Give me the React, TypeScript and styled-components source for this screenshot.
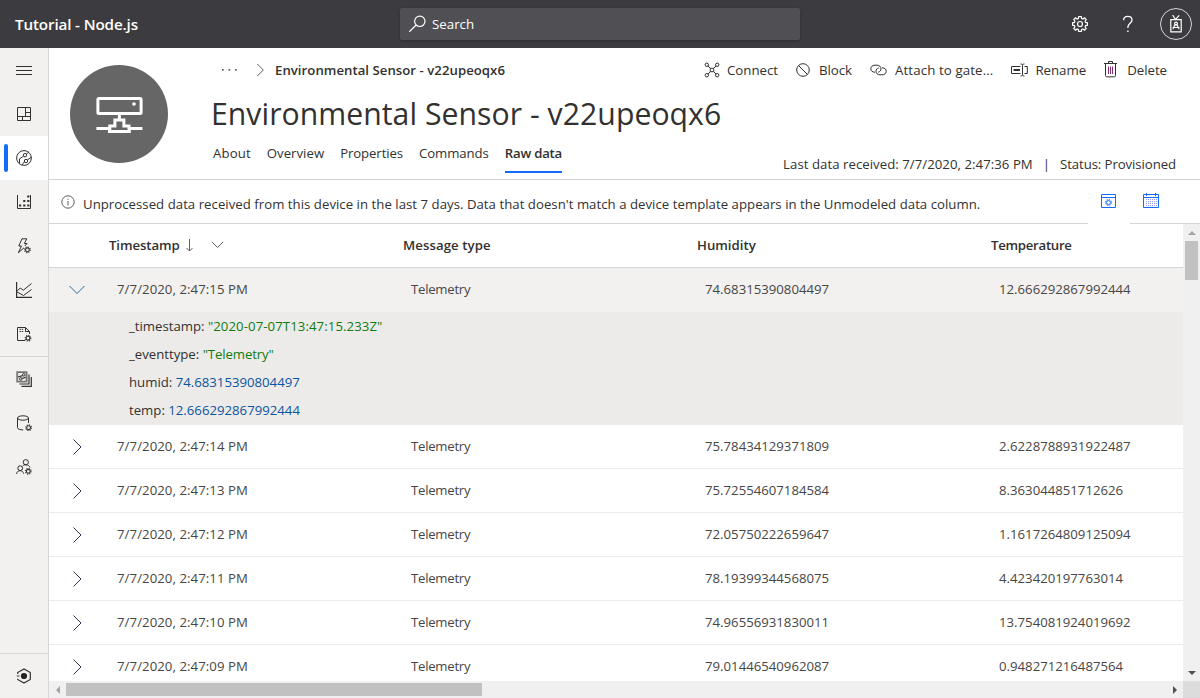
import React from "react";
import styled, { createGlobalStyle, css } from "styled-components";

const GlobalStyle = createGlobalStyle`
  * { box-sizing: border-box; }
  html, body { margin: 0; padding: 0; }
  body {
    background: #fff;
    color: #323130;
    font-family: "Open Sans", "Noto Sans", sans-serif;
    font-size: 13.2px;
    overflow: hidden;
  }
`;

const Shell = styled.div`
  display: flex;
  flex-direction: column;
  width: 1200px;
  height: 698px;
  overflow: hidden;
`;

/* ---------- top bar ---------- */

const TopBar = styled.header`
  flex: none;
  height: 48px;
  display: grid;
  grid-template-columns: 400px 400px 1fr;
  align-items: center;
  background: #3c3b40;
  color: #fff;
`;

const ProductName = styled.div`
  padding-left: 15px;
  font-size: 15.2px;
  font-weight: 600;
  letter-spacing: -0.13px;
`;

const SearchBox = styled.div`
  height: 32px;
  display: flex;
  align-items: center;
  gap: 5px;
  padding: 0 0 1px 9px;
  border-radius: 2px;
  background: #505054;
  box-shadow: 0 1px 3px rgba(0, 0, 0, 0.25);
  font-size: 13.3px;
`;

const TopActions = styled.div`
  display: flex;
  justify-content: flex-end;
  align-items: center;
  padding-right: 8px;
`;

const TopAction = styled.div`
  width: 48px;
  display: flex;
  justify-content: center;
`;

const Avatar = styled.div`
  width: 32px;
  height: 32px;
  margin-left: 8px;
  display: flex;
  align-items: center;
  justify-content: center;
  border: 1px solid #d6d6d8;
  border-radius: 50%;
`;

/* ---------- side navigation ---------- */

const Body = styled.div`
  flex: 1;
  min-height: 0;
  display: flex;
`;

const SideNav = styled.nav`
  flex: none;
  width: 49px;
  display: flex;
  flex-direction: column;
  background: #f2f1f0;
  border-right: 1px solid #d6d6d6;
`;

const NavItem = styled.div<{ $active?: boolean; $divided?: boolean; $last?: boolean }>`
  height: 44px;
  display: flex;
  align-items: center;
  justify-content: center;
  ${(p) =>
    p.$active &&
    css`
      background: #fff;
      justify-content: flex-start;
      &::before {
        content: "";
        width: 4px;
        height: 28px;
        margin: 0 8px 0 4px;
        border-radius: 2px;
        background: #136bfb;
      }
    `}
  ${(p) =>
    p.$divided &&
    css`
      height: 45px;
      border-top: 1px solid #d6d6d6;
    `}
  ${(p) =>
    p.$last &&
    css`
      margin-top: auto;
    `}
`;

/* ---------- device header ---------- */

const Main = styled.main`
  flex: 1;
  min-width: 0;
  display: flex;
  flex-direction: column;
`;

const DeviceHeader = styled.section`
  flex: none;
  height: 132px;
  display: flex;
  border-bottom: 1px solid #d6d6d6;
`;

const DeviceBadge = styled.div`
  flex: none;
  width: 98px;
  height: 98px;
  margin: 17px 43px 0 21px;
  display: flex;
  align-items: center;
  justify-content: center;
  border-radius: 50%;
  background: #666;
`;

const DeviceInfo = styled.div`
  flex: 1;
  min-width: 0;
  display: flex;
  flex-direction: column;
`;

const CrumbRow = styled.div`
  height: 44px;
  display: flex;
  align-items: center;
  justify-content: space-between;
  padding: 0 33px 0 11px;
`;

const Crumbs = styled.div`
  display: flex;
  align-items: center;
`;

const CrumbCurrent = styled.span`
  margin-left: 10px;
  font-size: 13.2px;
  font-weight: 600;
  letter-spacing: 0.03px;
`;

const Commands = styled.div`
  display: flex;
  align-items: center;
  gap: 18px;
  padding-bottom: 1px;
`;

const Command = styled.div<{ $gap?: number; $track?: number }>`
  display: flex;
  align-items: center;
  gap: ${(p) => p.$gap ?? 7}px;
  font-size: 13.3px;
  letter-spacing: ${(p) => p.$track ?? -0.05}px;
  white-space: nowrap;
`;

const Title = styled.h1`
  height: 44px;
  margin: 0;
  line-height: 43px;
  font-size: 30.2px;
  letter-spacing: 0.04px;
  font-weight: 400;
  white-space: nowrap;
`;

const TabRow = styled.div`
  display: flex;
  justify-content: space-between;
  padding: 0 24px 0 2px;
`;

const Tabs = styled.div`
  display: flex;
  gap: 16px;
`;

const Tab = styled.div<{ $active?: boolean; $track?: number }>`
  height: 37px;
  padding-top: 8px;
  line-height: 19px;
  white-space: nowrap;
  border-bottom: 2px solid ${(p) => (p.$active ? "#136bfb" : "transparent")};
  font-weight: ${(p) => (p.$active ? 600 : 400)};
  letter-spacing: ${(p) => p.$track ?? 0}px;
`;

const StatusLine = styled.div`
  display: flex;
  gap: 10px;
  padding-top: 19px;
  line-height: 19px;
  white-space: nowrap;
`;

const StatusPart = styled.span<{ $track?: number }>`
  letter-spacing: ${(p) => p.$track ?? 0}px;
`;

/* ---------- notice ---------- */

const Notice = styled.section`
  flex: none;
  height: 44px;
  display: flex;
`;

const NoticeText = styled.div`
  width: 1039px;
  display: flex;
  align-items: center;
  gap: 8px;
  padding: 5px 0 0 12px;
  border-bottom: 1px solid #d6d6d6;
  letter-spacing: 0.032px;
  white-space: nowrap;
  svg { position: relative; top: -2px; }
`;

const NoticeTool = styled.div<{ $ruled?: boolean }>`
  width: ${(p) => (p.$ruled ? 70 : 42)}px;
  padding: 13px 0 0 12px;
  border-bottom: ${(p) => (p.$ruled ? "1px solid #d6d6d6" : "0")};
`;

/* ---------- table ---------- */

const TableFrame = styled.section`
  flex: 1;
  min-height: 0;
  display: grid;
  grid-template-columns: 1134px 17px;
  grid-template-rows: 457px 17px;
`;

const Table = styled.div`
  overflow: hidden;
`;

const rowGrid = css`
  display: grid;
  grid-template-columns: 60px 294px 294px 294px 192px;
  align-items: center;
  height: 44px;
`;

const HeadRow = styled.div`
  ${rowGrid}
  border-bottom: 1px solid #d6d6d6;
  font-weight: 600;
`;

const HeadCell = styled.div<{ $track?: number }>`
  display: flex;
  align-items: center;
  padding-bottom: 1px;
  letter-spacing: ${(p) => p.$track ?? 0}px;
  white-space: nowrap;
`;

const Row = styled.div<{ $open?: boolean }>`
  ${rowGrid}
  border-bottom: 1px solid ${(p) => (p.$open ? "#f2f1f0" : "#edebe9")};
  background: ${(p) => (p.$open ? "#f2f1f0" : "#fff")};
  color: #484644;
`;

const Cell = styled.div<{ $track?: number }>`
  padding: 0 0 1px 8px;
  letter-spacing: ${(p) => p.$track ?? 0}px;
  white-space: nowrap;
`;

const Toggle = styled.div`
  display: flex;
  padding-left: 19px;
`;

const Details = styled.div`
  height: 113px;
  padding-left: 80px;
  background: #edebe9;
`;

const Detail = styled.div`
  height: 28px;
  line-height: 29px;
  white-space: nowrap;
`;

const Value = styled.span<{ $kind: "string" | "number"; $track?: number }>`
  color: ${(p) => (p.$kind === "string" ? "#107c10" : "#0b559f")};
  letter-spacing: ${(p) => p.$track ?? 0}px;
`;

/* ---------- scroll bars ---------- */

const ScrollTrack = styled.div<{ $axis: "x" | "y" }>`
  display: flex;
  flex-direction: ${(p) => (p.$axis === "x" ? "row" : "column")};
  align-items: center;
  background: #f0f0f0;
`;

const ScrollThumb = styled.div<{ $axis: "x" | "y" }>`
  background: #c1c1c1;
  width: ${(p) => (p.$axis === "x" ? "416px" : "13px")};
  height: ${(p) => (p.$axis === "x" ? "13px" : "39px")};
`;

const ScrollArrow = styled.div<{ $end?: boolean }>`
  width: 17px;
  height: 17px;
  display: flex;
  align-items: center;
  justify-content: center;
  margin: ${(p) => (p.$end ? "auto 0 0 0" : "0")};
`;

const ScrollArrowRight = styled(ScrollArrow)`
  margin: 0 0 0 auto;
`;

const Corner = styled.div`
  background: #dcdcdc;
`;

/* ---------- icons ---------- */

const Svg = styled.svg`
  flex: none;
`;

const BadgeSvg = styled.svg`
  margin-top: 2px;
`;

const CrumbArrow = styled.svg`
  margin-left: 18px;
`;

const SortArrow = styled.svg`
  margin-left: 5px;
`;

const SortChevron = styled.svg`
  margin-left: 18px;
`;

const Icon = ({
  size = 16,
  w,
  color = "#323130",
  sw = 1,
  children,
}: {
  size?: number;
  w?: number;
  color?: string;
  sw?: number;
  children: React.ReactNode;
}) => (
  <Svg
    width={w ?? size}
    height={size}
    viewBox={`0 0 ${w ?? size} ${size}`}
    fill="none"
    stroke={color}
    strokeWidth={sw}
  >
    {children}
  </Svg>
);

const MiniGear = ({ x, y }: { x: number; y: number }) => (
  <g transform={`translate(${x} ${y})`}>
    <circle r="1.9" strokeWidth="1.1" />
    <circle r="2.8" strokeWidth="1.2" strokeDasharray="1.1 1.1" />
  </g>
);

const Menu = () => (
  <Icon><path d="M0 4.5H16M0 8.5H16M0 12.5H16" /></Icon>
);
const Dashboard = () => (
  <Icon><path d="M1.5 1.5H14.5V14.5H1.5ZM1.5 10.5H14.5M9.5 1.5V10.5M9.5 6.5H14.5M6.5 10.5V14.5" /></Icon>
);
const Devices = () => (
  <Icon>
    <circle cx="8" cy="8" r="7.4" />
    <circle cx="9" cy="5.2" r="1.7" />
    <circle cx="10" cy="11" r="1.7" />
    <path d="M7.5 6.2L3.5 8.8V13.2M11.3 10L15.2 7.4M10.3 4.1L12.5 2.2M8.5 11.7L6 14.9" />
  </Icon>
);
const DeviceGroups = () => (
  <Icon>
    <path d="M1.5 1V14.5H14.5V1" />
    <path d="M3 11.5H5.2M7.2 11.5H9.4M11.2 11.5H13.4M7.2 7H9.4M11.2 7H13.4M11.2 2.5H13.4" strokeWidth="2.2" />
  </Icon>
);
const Rules = () => (
  <Icon>
    <path d="M6 .8H10.8L8.3 5.5H11L8.8 8M6 .8L2.8 8H5.5L2.3 14.8L8 9.8" />
    <MiniGear x={11.4} y={11.8} />
  </Icon>
);
const Analytics = () => (
  <Icon>
    <path d="M.6 0V15.4H16" strokeWidth="1.2" />
    <path d="M1 9.2L4.2 6L7.4 8.2L15.5 1.5M1 10L7.5 13.5L15.5 7.5" />
  </Icon>
);
const Jobs = () => (
  <Icon>
    <path d="M9 14.5H1.5V1.5H9.5L13.5 5.5V8M9.5 1.5V5.5H13.5" />
    <path d="M3.5 3.3H8M3.5 5.5H8" strokeDasharray="1.4 .8" />
    <MiniGear x={12} y={12.2} />
  </Icon>
);
const Templates = () => (
  <Icon>
    <path d="M1.2 1.2H10.6V10.6H1.2Z" strokeWidth="1.8" stroke="#777675" />
    <circle cx="7.8" cy="3.8" r="1.3" />
    <circle cx="4.8" cy="7.9" r="1.3" />
    <path d="M2 6L6.6 4.6M6 7.5L9.6 6.4M13 3.5V13H3.5M15.3 6V15.3H5.5" strokeWidth="1.2" />
  </Icon>
);
const DataExport = () => (
  <Icon>
    <ellipse cx="7" cy="3" rx="5.5" ry="2.2" />
    <path d="M1.5 3V12.7C1.5 14 4 14.9 7.2 14.9M12.5 3V8" />
    <MiniGear x={12.6} y={12.7} />
  </Icon>
);
const Admin = () => (
  <Icon>
    <circle cx="9.8" cy="3.2" r="2.6" />
    <circle cx="4.2" cy="9.2" r="2.4" />
    <path d="M.6 15C.8 12.8 2.2 11.7 4.2 11.7C6.2 11.7 7.2 12.9 7.6 14.6M6.7 7C7.5 6.1 8.6 5.8 9.8 5.8C12 5.8 13.6 6.9 14 8.6" />
    <MiniGear x={12.3} y={12.3} />
  </Icon>
);
const AppBadge = () => (
  <Icon>
    <path d="M1.7 6V4.5L8 1L14.3 4.5V11.5L8 15L1.7 11.5V10.8M.8 8H3.5" strokeWidth="1.2" />
    <circle cx="8" cy="8" r="3.1" fill="#222" stroke="none" />
  </Icon>
);

const DeviceGlyph = () => (
  <BadgeSvg width="48" height="38" viewBox="0 0 48 38" fill="none" stroke="#fff" strokeWidth="3">
    <rect x="2.9" y="2.5" width="43.2" height="15" rx="1" />
    <circle cx="39" cy="8" r="1.8" fill="#fff" stroke="none" />
    <path d="M24.4 18V23" />
    <path d="M1.4 32.5H14.4V35.5H34.4V32.5H47.4" strokeWidth="2.8" />
    <path d="M14.8 34V30H19.9V24H28.9V30H34V34" strokeWidth="3" />
  </BadgeSvg>
);

const GEAR =
  "M6.7.6H9.3L9.7 2.5L10.9 3L12.5 1.9L14.2 3.6L13.1 5.2L13.6 6.4L15.4 6.8V9.2L13.6 9.6L13.1 10.8L14.2 12.4L12.5 14.1L10.9 13L9.7 13.5L9.3 15.4H6.7L6.3 13.5L5.1 13L3.5 14.1L1.8 12.4L2.9 10.8L2.4 9.6L.6 9.2V6.8L2.4 6.4L2.9 5.2L1.8 3.6L3.5 1.9L5.1 3L6.3 2.5Z";

const navItems = [Menu, Dashboard, Devices, DeviceGroups, Rules, Analytics, Jobs, Templates, DataExport, Admin];

/* letter spacing of the timestamp, message type, humidity and temperature columns */
const columnTracking = [0.07, -0.27, 0, 0];

const rows = [
  ["7/7/2020, 2:47:14 PM", "Telemetry", "75.78434129371809", "2.6228788931922487"],
  ["7/7/2020, 2:47:13 PM", "Telemetry", "75.72554607184584", "8.363044851712626"],
  ["7/7/2020, 2:47:12 PM", "Telemetry", "72.05750222659647", "1.1617264809125094"],
  ["7/7/2020, 2:47:11 PM", "Telemetry", "78.19399344568075", "4.423420197763014"],
  ["7/7/2020, 2:47:10 PM", "Telemetry", "74.96556931830011", "13.754081924019692"],
  ["7/7/2020, 2:47:09 PM", "Telemetry", "79.01446540962087", "0.948271216487564"],
];

const openRow = ["7/7/2020, 2:47:15 PM", "Telemetry", "74.68315390804497", "12.666292867992444"];

const Cells = ({ values }: { values: string[] }) => (
  <>
    {values.map((v, i) => (
      <Cell key={i} $track={columnTracking[i]}>{v}</Cell>
    ))}
  </>
);

export default function App() {
  return (
    <Shell>
      <GlobalStyle />
      <TopBar>
        <ProductName>Tutorial - Node.js</ProductName>
        <SearchBox>
          <Icon size={18} color="#fff" sw={1.2}>
            <circle cx="10.8" cy="6.3" r="5.2" />
            <path d="M7.1 10L.3 16.8" />
          </Icon>
          Search
        </SearchBox>
        <TopActions>
          <TopAction>
            <Icon color="#fff" sw={1.2}><path d={GEAR} /><circle cx="8" cy="8" r="2.5" /></Icon>
          </TopAction>
          <TopAction>
            <Icon size={18} w={12} color="#fff" sw={1.3}>
              <path d="M1.6 5.2C1.6 2.7 3.3 1.3 5.8 1.3C8.4 1.3 10 2.8 10 5C10 8.3 5.9 8.4 5.9 12.3V13" />
              <path d="M5.2 16.2H6.6" strokeWidth="1.6" />
            </Icon>
          </TopAction>
          <Avatar>
            <Icon size={18} w={12} color="#fff" sw={1.2}>
              <path d="M.8 4.6H11.2V16.8H.8ZM2.6 0L5.6 4.5L9.2 .4" />
              <path d="M3.2 14.2V12.5H8.8V14.2M3.8 12.5L4.6 10H7.4L8.2 12.5" />
              <circle cx="6" cy="8.5" r="1.4" />
            </Icon>
          </Avatar>
        </TopActions>
      </TopBar>
      <Body>
        <SideNav>
          {navItems.map((Glyph, i) => (
            <NavItem key={i} $active={i === 2} $divided={i === 7}>
              <Glyph />
            </NavItem>
          ))}
          <NavItem $divided $last><AppBadge /></NavItem>
        </SideNav>
        <Main>
          <DeviceHeader>
            <DeviceBadge><DeviceGlyph /></DeviceBadge>
            <DeviceInfo>
              <CrumbRow>
                <Crumbs>
                  <Icon w={17}>
                    <g fill="#605e5c" stroke="none">
                      <rect x="0" y="7" width="1.7" height="1.7" />
                      <rect x="6.5" y="7" width="1.7" height="1.7" />
                      <rect x="13" y="7" width="1.7" height="1.7" />
                    </g>
                  </Icon>
                  <CrumbArrow width="8" height="14" viewBox="0 0 8 14" fill="none" stroke="#605e5c">
                    <path d="M.3 1L6.3 7L.3 13" />
                  </CrumbArrow>
                  <CrumbCurrent>Environmental Sensor - v22upeoqx6</CrumbCurrent>
                </Crumbs>
                <Commands>
                  <Command>
                    <Icon>
                      <circle cx="2.8" cy="2.8" r="1.7" /><circle cx="13.2" cy="2.8" r="1.7" />
                      <circle cx="2.8" cy="13.2" r="1.7" /><circle cx="13.2" cy="13.2" r="1.7" />
                      <path d="M4 4L6.3 6.3M12 4L9.7 6.3M4 12L6.3 9.7M12 12L9.7 9.7M6.3 6.3H9.7V9.7H6.3Z" />
                    </Icon>
                    Connect
                  </Command>
                  <Command $gap={9}>
                    <Icon size={14}><circle cx="7" cy="7" r="6.3" /><path d="M2.6 2.6L11.4 11.4" /></Icon>
                    Block
                  </Command>
                  <Command $gap={8} $track={0.1}>
                    <Icon w={17}>
                      <path d="M5 10.2C2.5 10.2.8 9 .8 6.8C.8 4.6 2.5 3.2 5 3.2H7C9.3 3.2 11 4.6 11 6.8C11 8.6 9.8 9.9 8.2 10.2" />
                      <path d="M12 5.8C14.5 5.8 16.2 7.2 16.2 9.3C16.2 11.5 14.5 12.8 12 12.8H10C7.7 12.8 6 11.5 6 9.3C6 7.5 7.2 6.2 8.8 5.9" />
                    </Icon>
                    Attach to gate...
                  </Command>
                  <Command $gap={7}>
                    <Icon w={17}>
                      <path d="M9.5 4.5H.5V11.5H9.5M13.5 4.5H16.3V11.5H13.5M9.5 2C10.8 2 11.5 2.4 11.5 3.2V12.8C11.5 13.6 10.8 14 9.5 14M13.5 2C12.2 2 11.5 2.4 11.5 3.2M11.5 12.8C11.5 13.6 12.2 14 13.5 14" />
                      <path d="M2.5 8H9" strokeWidth="2" />
                    </Icon>
                    Rename
                  </Command>
                  <Command $gap={10}>
                    <Icon size={17} w={13}>
                      <path d="M0 2.5H13M4.5 2.5V.5H8.5V2.5M1.5 2.5V14.5C1.5 15.5 2 15.8 2.8 15.8H10.2C11 15.8 11.5 15.5 11.5 14.5V2.5" />
                      <path d="M4.5 5.5V13M6.5 5.5V13M8.5 5.5V13" stroke="#84307a" />
                    </Icon>
                    Delete
                  </Command>
                </Commands>
              </CrumbRow>
              <Title>Environmental Sensor - v22upeoqx6</Title>
              <TabRow>
                <Tabs>
                  <Tab $track={0.13}>About</Tab>
                  <Tab $track={0.02}>Overview</Tab>
                  <Tab $track={-0.1}>Properties</Tab>
                  <Tab $track={-0.08}>Commands</Tab>
                  <Tab $active $track={-0.22}>Raw data</Tab>
                </Tabs>
                <StatusLine>
                  <StatusPart $track={0.045}>Last data received: 7/7/2020, 2:47:36 PM</StatusPart>
                  <StatusPart>|</StatusPart>
                  <StatusPart $track={-0.08}>Status: Provisioned</StatusPart>
                </StatusLine>
              </TabRow>
            </DeviceInfo>
          </DeviceHeader>
          <Notice>
            <NoticeText>
              <Icon size={14} color="#605e5c">
                <circle cx="7" cy="7" r="6.2" />
                <path d="M7 6V10.5M7 3.6V4.8" />
              </Icon>
              <span>
                Unprocessed data received from this device in the last 7 days. Data that doesn't match a device template
                appears in the Unmodeled data column.
              </span>
            </NoticeText>
            <NoticeTool>
              <Icon color="#136bfb">
                <path d="M1.5 1.5H15.5V14.5H1.5ZM1.5 4.5H15.5" />
                <circle cx="8.5" cy="9.5" r="2" />
                <circle cx="8.5" cy="9.5" r="3.1" strokeDasharray="1.2 1.23" />
              </Icon>
            </NoticeTool>
            <NoticeTool $ruled>
              <Icon w={18} color="#136bfb">
                <path d="M1.5 1.5H16.5V14.5H1.5ZM1.5 4.5H16.5M4.5 0V3M13.5 0V3" />
                <path d="M4 6.5H15M4 8.5H15M4 10.5H15M4 12.5H15" strokeDasharray="1 1" strokeWidth=".8" stroke="#7a86f5" />
              </Icon>
            </NoticeTool>
          </Notice>
          <TableFrame>
            <Table>
              <HeadRow>
                <span />
                <HeadCell $track={-0.08}>
                  Timestamp
                  <SortArrow width="8" height="13" viewBox="0 0 8 13" fill="none" stroke="#605e5c">
                    <path d="M4.5 0V12M1.5 9L4.5 12L7.5 9" />
                  </SortArrow>
                  <SortChevron width="13" height="8" viewBox="0 0 13 8" fill="none" stroke="#605e5c">
                    <path d="M.8 .8L6.5 6.5L12.2 .8" />
                  </SortChevron>
                </HeadCell>
                <HeadCell $track={0.08}>Message type</HeadCell>
                <HeadCell>Humidity</HeadCell>
                <HeadCell $track={-0.27}>Temperature</HeadCell>
              </HeadRow>
              <Row $open>
                <Toggle>
                  <svg width="18" height="10" viewBox="0 0 18 10" fill="none" stroke="#2b6a94">
                    <path d="M1.5 1L9 8.5L16.5 1" />
                  </svg>
                </Toggle>
                <Cells values={openRow} />
              </Row>
              <Details>
                <Detail>_timestamp: <Value $kind="string" $track={0.08}>"2020-07-07T13:47:15.233Z"</Value></Detail>
                <Detail>_eventtype: <Value $kind="string" $track={-0.1}>"Telemetry"</Value></Detail>
                <Detail>humid: <Value $kind="number">74.68315390804497</Value></Detail>
                <Detail>temp: <Value $kind="number">12.666292867992444</Value></Detail>
              </Details>
              {rows.map((r) => (
                <Row key={r[0]}>
                  <Toggle>
                    <svg width="18" height="18" viewBox="0 0 18 18" fill="none" stroke="#3d2b52">
                      <path d="M5.5 1.5L13 9L5.5 16.5" />
                    </svg>
                  </Toggle>
                  <Cells values={r} />
                </Row>
              ))}
            </Table>
            <ScrollTrack $axis="y">
              <ScrollArrow><svg width="8" height="4"><path d="M0 4L4 0L8 4Z" fill="#a3a3a3" /></svg></ScrollArrow>
              <ScrollThumb $axis="y" />
              <ScrollArrow $end><svg width="8" height="4"><path d="M0 0L4 4L8 0Z" fill="#505050" /></svg></ScrollArrow>
            </ScrollTrack>
            <ScrollTrack $axis="x">
              <ScrollArrow><svg width="4" height="8"><path d="M4 0L0 4L4 8Z" fill="#a3a3a3" /></svg></ScrollArrow>
              <ScrollThumb $axis="x" />
              <ScrollArrowRight><svg width="4" height="8"><path d="M0 0L4 4L0 8Z" fill="#505050" /></svg></ScrollArrowRight>
            </ScrollTrack>
            <Corner />
          </TableFrame>
        </Main>
      </Body>
    </Shell>
  );
}
